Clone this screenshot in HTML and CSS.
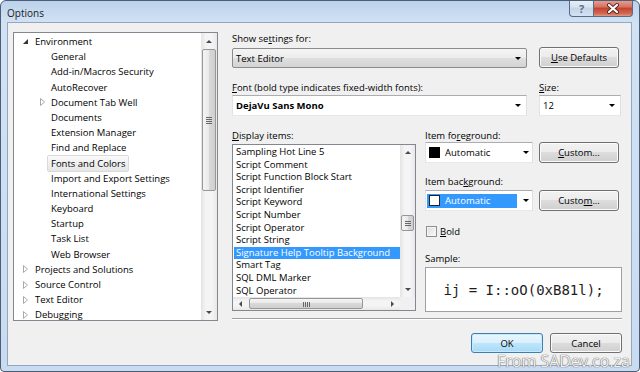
FILE: index.html
```html
<!DOCTYPE html>
<html lang="en">
<head>
  <meta charset="UTF-8" />
  <title>Options</title>
<link rel="stylesheet" href="styles.css">
</head>
<body>
  <div class="window">
    <div class="titlebar">
      <span class="title">Options</span>
      <div class="caption">
        <span class="cap-btn help">?</span>
        <span class="cap-btn close">
          <svg width="14" height="11" viewBox="0 0 14 11">
            <path d="M3 2 L11 9 M11 2 L3 9" stroke="#5a2620" stroke-width="4" stroke-linecap="round"/>
            <path d="M3 2 L11 9 M11 2 L3 9" stroke="#ffffff" stroke-width="2.2" stroke-linecap="round"/>
          </svg>
        </span>
      </div>
    </div>

    <div class="client">
      <div class="main">
        <div class="tree">
          <ul class="tree-items">
            <li class="l1"><span class="exp"><svg width="5" height="5"><path d="M5 0 L5 5 L0 5 Z" fill="#333"/></svg></span>Environment</li>
            <li class="l2"><span class="exp"></span>General</li>
            <li class="l2"><span class="exp"></span>Add-in/Macros Security</li>
            <li class="l2"><span class="exp"></span>AutoRecover</li>
            <li class="l2"><span class="exp"><svg class="closed" width="5" height="8"><path d="M0.5 0.5 L4.5 4 L0.5 7.5 Z" fill="#fff" stroke="#a8a8a8"/></svg></span>Document Tab Well</li>
            <li class="l2"><span class="exp"></span>Documents</li>
            <li class="l2"><span class="exp"></span>Extension Manager</li>
            <li class="l2"><span class="exp"></span>Find and Replace</li>
            <li class="l2"><span class="exp"></span><span class="tree-sel">Fonts and Colors</span></li>
            <li class="l2"><span class="exp"></span>Import and Export Settings</li>
            <li class="l2"><span class="exp"></span>International Settings</li>
            <li class="l2"><span class="exp"></span>Keyboard</li>
            <li class="l2"><span class="exp"></span>Startup</li>
            <li class="l2"><span class="exp"></span>Task List</li>
            <li class="l2"><span class="exp"></span>Web Browser</li>
            <li class="l1"><span class="exp"><svg width="5" height="8"><path d="M0.5 0.5 L4.5 4 L0.5 7.5 Z" fill="#fff" stroke="#a8a8a8"/></svg></span>Projects and Solutions</li>
            <li class="l1"><span class="exp"><svg width="5" height="8"><path d="M0.5 0.5 L4.5 4 L0.5 7.5 Z" fill="#fff" stroke="#a8a8a8"/></svg></span>Source Control</li>
            <li class="l1"><span class="exp"><svg width="5" height="8"><path d="M0.5 0.5 L4.5 4 L0.5 7.5 Z" fill="#fff" stroke="#a8a8a8"/></svg></span>Text Editor</li>
            <li class="l1"><span class="exp"><svg width="5" height="8"><path d="M0.5 0.5 L4.5 4 L0.5 7.5 Z" fill="#fff" stroke="#a8a8a8"/></svg></span>Debugging</li>
          </ul>
          <div class="vscroll tree-scroll">
            <div class="sb-btn"><span class="arr up"></span></div>
            <div class="sb-track"><div class="thumb tree-thumb"></div></div>
            <div class="sb-btn"><span class="arr down"></span></div>
          </div>
        </div>

        <div class="settings">
          <div class="label">Show se<u>t</u>tings for:</div>
          <div class="row row-show">
            <div class="combo combo-ro wide"><span class="combo-text">Text Editor</span><span class="arrow"></span></div>
            <button class="btn btn-wide"><u>U</u>se Defaults</button>
          </div>

          <div class="row row-labels">
            <div class="label font-label"><u>F</u>ont (bold type indicates fixed-width fonts):</div>
            <div class="label"><u>S</u>ize:</div>
          </div>
          <div class="row row-font">
            <div class="combo wide"><span class="combo-text bold">DejaVu Sans Mono</span><span class="arrow"></span></div>
            <div class="combo size"><span class="combo-text">12</span><span class="arrow"></span></div>
          </div>

          <div class="columns">
            <div class="col-items">
              <div class="label"><u>D</u>isplay items:</div>
              <div class="list">
                <ul class="list-items">
                  <li>Sampling Hot Line 5</li>
                  <li>Script Comment</li>
                  <li>Script Function Block Start</li>
                  <li>Script Identifier</li>
                  <li>Script Keyword</li>
                  <li>Script Number</li>
                  <li>Script Operator</li>
                  <li>Script String</li>
                  <li class="selected">Signature Help Tooltip Background</li>
                  <li>Smart Tag</li>
                  <li>SQL DML Marker</li>
                  <li>SQL Operator</li>
                </ul>
                <div class="vscroll list-scroll">
                  <div class="sb-btn small"><span class="arr up"></span></div>
                  <div class="sb-track"><div class="thumb list-thumb"></div></div>
                  <div class="sb-btn small"><span class="arr down"></span></div>
                </div>
                <div class="hscroll">
                  <div class="sb-btn-h"><span class="arr left"></span></div>
                  <div class="sb-track-h"><div class="hthumb"></div></div>
                  <div class="sb-btn-h"><span class="arr right"></span></div>
                </div>
                <div class="corner"></div>
              </div>
            </div>

            <div class="col-colors">
              <div class="label">Item fo<u>r</u>eground:</div>
              <div class="row">
                <div class="combo color-combo">
                  <span class="val"><span class="swatch black"></span>Automatic</span>
                  <span class="arrow"></span>
                </div>
                <button class="btn btn-custom"><u>C</u>ustom...</button>
              </div>

              <div class="label gap-label">Item bac<u>k</u>ground:</div>
              <div class="row row-bg">
                <div class="combo color-combo">
                  <span class="val focused"><span class="swatch white"></span>Automatic</span>
                  <span class="arrow"></span>
                </div>
                <button class="btn btn-custom">Custo<u>m</u>...</button>
              </div>

              <div class="check-row">
                <span class="checkbox"></span><span><u>B</u>old</span>
              </div>

              <div class="label sample-label">Sample:</div>
              <div class="sample">ij = I::oO(0xB81l);</div>
            </div>
          </div>

          <div class="separator"></div>
        </div>
      </div>

      <div class="footer">
        <button class="btn btn-ok default">OK</button>
        <button class="btn btn-ok">Cancel</button>
      </div>
    </div>

    <div class="watermark">From SADev.co.za</div>
  </div>
</body>
</html>
```

FILE: styles.css
```css
* {
  box-sizing: border-box;
}

body {
  margin: 0;
  font-family: "Open Sans", sans-serif;
  font-size: 9.5px;
  color: #000;
  background: #fff;
}

ul {
  list-style: none;
  margin: 0;
  padding: 0;
}

u {
  text-decoration-thickness: 1px;
  text-underline-offset: 1px;
}

.window {
  position: relative;
  width: 640px;
  height: 372px;
  border: 1px solid #4b5e76;
  border-radius: 6px 6px 4px 4px;
  background: linear-gradient(to bottom, #bcd2ec 0, #d1e2f4 22px, #c8dbf0 100%);
  padding: 0 7px 5px 6px;
  display: flex;
  flex-direction: column;
  overflow: hidden;
}

/* title bar */
.titlebar {
  height: 21px;
  display: flex;
  justify-content: space-between;
  align-items: flex-start;
  flex-shrink: 0;
}

.title {
  padding-top: 5px;
  line-height: 14px;
  font-size: 10px;
  color: #1a1a1a;
}

.caption {
  display: flex;
  margin-top: -1px;
  margin-right: -1px;
}

.cap-btn {
  height: 17px;
  display: flex;
  justify-content: center;
  align-items: center;
  border: 1px solid #5b6b82;
  border-top: none;
}

.help {
  width: 24px;
  border-right: none;
  border-radius: 0 0 0 4px;
  background: linear-gradient(to bottom, #e9f0f8 0, #d5e2f0 45%, #c3d4e8 50%, #d4e3f3 100%);
  color: #5d6d85;
  font-size: 11px;
  font-weight: bold;
}

.close {
  width: 40px;
  border-radius: 0 0 4px 0;
  background: linear-gradient(to bottom, #e7a598 0, #d4705f 45%, #c2412e 50%, #d06a55 85%, #e39a7e 100%);
}

/* client area */
.client {
  flex: 1;
  border: 1px solid #93a7c0;
  background: #f0f0f0;
  padding: 9px 9px 0 5px;
  display: flex;
  flex-direction: column;
}

.main {
  display: flex;
  align-items: flex-start;
}

/* tree */
.tree {
  width: 205px;
  height: 289px;
  border: 1px solid #828790;
  background: #fff;
  display: flex;
}

.tree-items {
  flex: 1;
  padding-top: 1px;
  line-height: 15.2px;
  overflow: hidden;
  white-space: nowrap;
}

.tree-items li {
  display: flex;
  align-items: center;
  height: 15.2px;
}

.l1 {
  padding-left: 9px;
}

.l2 {
  padding-left: 25px;
}

.exp {
  width: 12px;
  display: inline-flex;
  align-items: center;
}

.exp .closed {
  margin-left: 1px;
}

.tree-sel {
  margin-left: -4px;
  padding: 0 3px;
  line-height: 15px;
  border: 1px solid #d9d9d9;
  border-radius: 2px;
  background: linear-gradient(to bottom, #fafafa, #e6e6e6);
}

/* scrollbars */
.vscroll {
  display: flex;
  flex-direction: column;
  background: linear-gradient(to right, #e4e4e4, #f4f4f4 30%, #f4f4f4 70%, #e8e8e8);
}

.tree-scroll {
  width: 16px;
}

.sb-btn {
  height: 16px;
  display: flex;
  justify-content: center;
  align-items: center;
}

.sb-btn.small {
  height: 15px;
}

.sb-track {
  flex: 1;
}

.arr {
  width: 0;
  height: 0;
  border: 3px solid transparent;
}

.arr.up {
  border-bottom-color: #4a4a4a;
  border-top-width: 0;
}

.arr.down {
  border-top-color: #4a4a4a;
  border-bottom-width: 0;
}

.arr.left {
  border-right-color: #4a4a4a;
  border-left-width: 0;
}

.arr.right {
  border-left-color: #4a4a4a;
  border-right-width: 0;
}

.thumb {
  position: relative;
  margin: 0 1px;
  border: 1px solid #979797;
  border-radius: 2px;
  background: linear-gradient(to right, #f5f5f5, #e9e9e9 50%, #d9d9d9 50%, #cfcfcf);
}

.thumb::after {
  content: "";
  position: absolute;
  left: 50%;
  top: 50%;
  width: 6px;
  height: 7px;
  margin: -3px 0 0 -3px;
  background: repeating-linear-gradient(to bottom, #666 0 1px, transparent 1px 2px);
}

.tree-thumb {
  height: 142px;
}

.list-thumb {
  margin-top: 55px;
  height: 16px;
}

.list-thumb::after {
  height: 5px;
  margin-top: -2px;
}

/* settings panel */
.settings {
  width: 390px;
  margin-left: 14px;
}

.label {
  line-height: 13px;
  height: 13px;
  white-space: nowrap;
}

.row {
  display: flex;
  align-items: flex-start;
}

.row-show {
  margin-top: 3px;
  gap: 12px;
}

.row-labels {
  margin-top: 13px;
}

.font-label {
  width: 307px;
}

.row-font {
  margin-top: 1px;
  gap: 12px;
}

.combo {
  height: 21px;
  display: flex;
  align-items: center;
  padding-left: 3px;
  background: #fff;
  border: 1px solid;
  border-color: #abadb3 #dbdfe6 #e3e9ef #e2e3ea;
  white-space: nowrap;
}

.combo-ro {
  height: 20px;
  border: 1px solid #8b8b8b;
  border-radius: 2px;
  background: linear-gradient(to bottom, #f4f4f4 0, #ececec 50%, #dfdfdf 50%, #d3d3d3 100%);
}

.wide {
  width: 295px;
}

.size {
  width: 82px;
}

.bold {
  font-weight: bold;
}

.arrow {
  margin-left: auto;
  margin-right: 5px;
  width: 0;
  height: 0;
  border-left: 3px solid transparent;
  border-right: 3px solid transparent;
  border-top: 3px solid #000;
}

.btn {
  font-family: inherit;
  font-size: 9.5px;
  color: #000;
  height: 21px;
  padding: 0;
  border: 1px solid #707070;
  border-radius: 3px;
  background: linear-gradient(to bottom, #f2f2f2 0, #ebebeb 50%, #dddddd 50%, #cfcfcf 100%);
  box-shadow: inset 0 0 0 1px #fbfbfb;
}

.btn-wide {
  width: 80px;
  margin-top: -1px;
}

.btn-custom {
  width: 80px;
  margin-left: 6px;
}

/* lower columns */
.columns {
  display: flex;
  margin-top: 13px;
}

.col-items {
  width: 184px;
}

.list {
  margin-top: 2px;
  height: 167px;
  border: 1px solid #828790;
  background: #fff;
  display: grid;
  grid-template-columns: 1fr 15px;
  grid-template-rows: 1fr 13px;
  overflow: hidden;
}

.list-items {
  overflow: hidden;
  white-space: nowrap;
  padding: 1px 0 0 1px;
  line-height: 12.6px;
}

.list-items li {
  padding-left: 2px;
  height: 12.6px;
}

.list-items li.selected {
  background: #3399ff;
  color: #fff;
}

.hscroll {
  display: flex;
  background: linear-gradient(to bottom, #e4e4e4, #f4f4f4 30%, #f4f4f4 70%, #e8e8e8);
}

.sb-btn-h {
  width: 15px;
  display: flex;
  justify-content: center;
  align-items: center;
}

.sb-track-h {
  flex: 1;
}

.hthumb {
  position: relative;
  margin: 1px 0 1px 1px;
  width: 114px;
  height: 11px;
  border: 1px solid #979797;
  border-radius: 2px;
  background: linear-gradient(to bottom, #f5f5f5, #e9e9e9 50%, #d9d9d9 50%, #cfcfcf);
}

.hthumb::after {
  content: "";
  position: absolute;
  left: 50%;
  top: 50%;
  width: 7px;
  height: 5px;
  margin: -2px 0 0 -3px;
  background: repeating-linear-gradient(to right, #666 0 1px, transparent 1px 2px);
}

.corner {
  background: #f0f0f0;
}

.col-colors {
  width: 197px;
  margin-left: 9px;
}

.color-combo {
  width: 108px;
  padding-left: 0;
}

.val {
  width: 90px;
  height: 14px;
  margin-left: 1px;
  padding-left: 2px;
  display: flex;
  align-items: center;
  gap: 5px;
}

.val.focused {
  background: #3399ff;
  color: #fff;
}

.swatch {
  width: 11px;
  height: 11px;
}

.swatch.black {
  background: #000;
}

.swatch.white {
  background: #fff;
  border: 1px solid #222;
}

.color-combo .arrow {
  margin-right: 3px;
}

.gap-label {
  margin-top: 12px;
}

.row-bg {
  margin-top: 2px;
}

.check-row {
  margin-top: 13px;
  height: 15px;
  display: flex;
  align-items: center;
  gap: 3px;
}

.checkbox {
  width: 11px;
  height: 11px;
  margin-left: 1px;
  border: 1px solid #8e8f8f;
  background: linear-gradient(135deg, #dcdcdc, #fbfbfb);
  box-shadow: inset 0 0 0 1px #f4f4f4;
}

.sample-label {
  margin-top: 13px;
}

.sample {
  margin-top: 2px;
  height: 45px;
  border: 1px solid #a0a0a0;
  background: #fff;
  display: flex;
  justify-content: center;
  align-items: center;
  font-family: "DejaVu Sans Mono", monospace;
  font-size: 14px;
  color: #1e1e1e;
}

.separator {
  margin-top: 6px;
  height: 2px;
  border-top: 1px solid #a0a0a0;
  border-bottom: 1px solid #fff;
}

/* footer buttons */
.footer {
  display: flex;
  justify-content: flex-end;
  gap: 7px;
  margin-top: 12px;
}

.btn-ok {
  width: 72px;
  height: 20px;
}

.btn.default {
  border-color: #3c7fb1;
  background: linear-gradient(to bottom, #eaf6fd 0, #d9f0fc 50%, #bee6fd 50%, #a7d9f5 100%);
  box-shadow: inset 0 0 0 1px #c6e9fd;
}

.watermark {
  position: absolute;
  right: 9px;
  bottom: 1px;
  font-size: 16px;
  line-height: 17px;
  color: #f2f2f2;
  text-shadow: 0 0 1px #5e5e5e, 0 0 1px #5e5e5e;
}
```
